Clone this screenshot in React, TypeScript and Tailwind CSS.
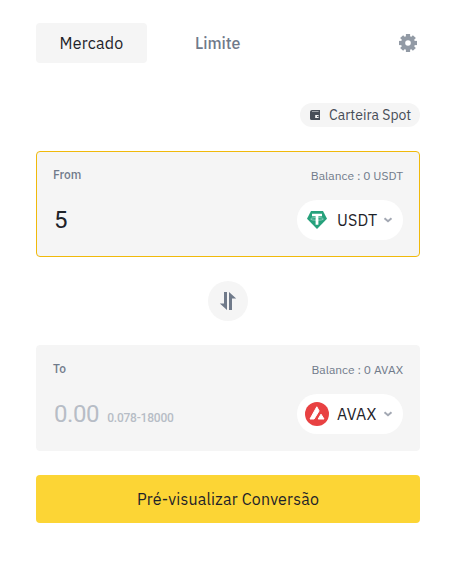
import React from "react";

function GearIcon() {
  return (
    <svg width="20" height="20" viewBox="0 0 20 20" fill="none">
      <g fill="#929aa5">
        <rect x="7.9" y="1" width="4.2" height="18" />
        <rect x="7.9" y="1" width="4.2" height="18" transform="rotate(45 10 10)" />
        <rect x="7.9" y="1" width="4.2" height="18" transform="rotate(90 10 10)" />
        <rect x="7.9" y="1" width="4.2" height="18" transform="rotate(135 10 10)" />
        <circle cx="10" cy="10" r="7" />
      </g>
      <circle cx="10" cy="10" r="2.8" fill="white" />
    </svg>
  );
}

function WalletIcon() {
  return (
    <svg width="10" height="10" viewBox="0 0 10 10">
      <path
        fill="#474d57"
        fillRule="evenodd"
        d="M2 0H10V10H1.5Q0 10 0 8.5V2Q0 0 2 0ZM2 1.4V2H8.6V1.4ZM5.2 5V8H8.6V5Z"
      />
      <path fill="#474d57" d="M7 5.9H8.6V7.1H7Z" />
    </svg>
  );
}

function TetherIcon() {
  return (
    <svg width="24" height="24" viewBox="0 0 24 24">
      <path fill="#26a17b" d="M6 3H18L22 10.8L12 21L2 10.8Z" />
      <path fill="white" d="M7 5.8H17V8.3H13.4V16.8H10.6V8.3H7Z" />
      <path d="M10.6 9.5Q5.6 9.8 5.6 10.9Q5.6 12.2 12 12.2T18.4 10.9Q18.4 9.8 13.4 9.5" fill="none" stroke="white" strokeWidth="0.45" />
    </svg>
  );
}

function AvalancheIcon() {
  return (
    <svg width="24" height="24" viewBox="0 0 24 24">
      <circle cx="12" cy="12" r="12" fill="#e84142" />
      <g fill="white" stroke="white" strokeWidth="1" strokeLinejoin="round">
        <path d="M11.8 4.8L14.1 8.9L9.1 17H5Z" />
        <path d="M16 12.2L19 17H13.2Z" />
      </g>
    </svg>
  );
}

function Chevron() {
  return (
    <svg width="10" height="6" viewBox="0 0 10 6" fill="none">
      <path d="M1.5 1.2L5 4.2L8.5 1.2" stroke="#a3a8b3" strokeWidth="2" />
    </svg>
  );
}

function SwapIcon() {
  return (
    <svg width="18" height="18" viewBox="0 0 18 18" fill="#707a8a">
      <path d="M5 0H8V18L0.8 11.5H5Z" />
      <path d="M10 18V0L17.2 6.5H13V18Z" />
    </svg>
  );
}

function CoinButton({ icon, symbol }: { icon: React.ReactNode; symbol: string }) {
  return (
    <button className="flex h-10 w-[106px] items-center rounded-full bg-white pl-2">
      {icon}
      <span className="ml-2 w-[46px] text-left text-base leading-6 tracking-[0.2px] text-[#1e2329]">{symbol}</span>
      <Chevron />
    </button>
  );
}

export default function App() {
  return (
    <main className="h-[561px] w-[451px] bg-white pt-[23px] pr-[31px] pl-9 font-['IBM_Plex_Sans',Roboto,sans-serif]">
      <header className="flex h-10 items-center">
        <button className="h-10 w-[111px] rounded bg-[#f5f5f5] text-base tracking-[0.2px] text-[#1e2329]">Mercado</button>
        <button className="ml-12 text-base font-medium text-[#707a8a]">Limite</button>
        <button className="mr-0.5 ml-auto" aria-label="Configurações">
          <GearIcon />
        </button>
      </header>

      <div className="mt-10 flex justify-end">
        <button className="flex h-6 w-[120px] items-center gap-[9px] rounded-full bg-[#f5f5f5] pl-2.5 text-sm whitespace-nowrap text-[#474d57]">
          <WalletIcon />
          Carteira Spot
        </button>
      </div>

      <section className="mt-6 h-[106px] rounded border border-[#f0b90b] bg-[#f5f5f5] px-4 pt-[15px]">
        <div className="flex h-4 items-center justify-between text-xs text-[#707a8a]">
          <span className="font-medium">From</span>
          <span className="pt-0.5">Balance : 0 USDT</span>
        </div>
        <div className="mt-[17px] flex h-10 items-center justify-between">
          <span className="pl-px font-[Roboto,sans-serif] text-2xl text-[#1e2329]">5</span>
          <CoinButton icon={<TetherIcon />} symbol="USDT" />
        </div>
      </section>

      <div className="flex h-[88px] items-center justify-center">
        <button className="flex size-10 items-center justify-center rounded-full bg-[#f5f5f5]" aria-label="Inverter">
          <SwapIcon />
        </button>
      </div>

      <section className="h-[106px] rounded border border-[#f5f5f5] bg-[#f5f5f5] px-4 pt-[15px]">
        <div className="flex h-4 items-center justify-between text-xs text-[#707a8a]">
          <span className="font-medium">To</span>
          <span className="pt-0.5">Balance : 0 AVAX</span>
        </div>
        <div className="mt-[17px] flex h-10 items-center justify-between">
          <div className="flex items-baseline gap-2 pl-px font-[Roboto,sans-serif] text-[#b7bdc6]">
            <span className="text-2xl tracking-[-0.4px]">0.00</span>
            <span className="text-xs font-medium tracking-[-0.22px]">0.078-18000</span>
          </div>
          <CoinButton icon={<AvalancheIcon />} symbol="AVAX" />
        </div>
      </section>

      <button className="mt-6 h-12 w-full rounded bg-[#fcd535] text-base tracking-[0.2px] text-[#1e2329]">
        Pré-visualizar Conversão
      </button>
    </main>
  );
}
